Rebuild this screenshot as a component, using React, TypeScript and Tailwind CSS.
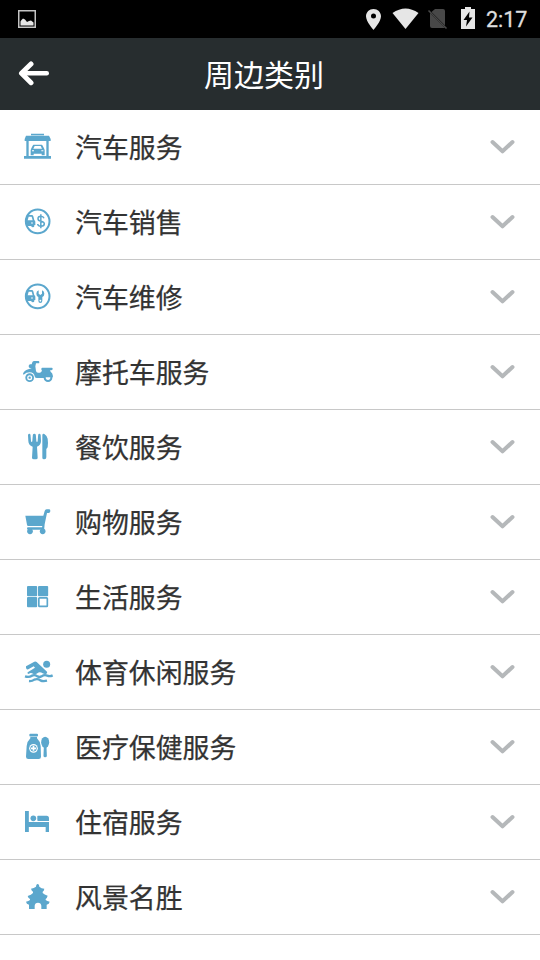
import React from "react";

const BLUE = "#5ba7cd";

const minicar = (
  <>
    <path fillRule="evenodd" d="M51 60h14q4 0 5 4l3 12q3 1 3 5v9h-3v3q0 4-4.500 4T64 94v-1H52l-6-12z M56 65l-3 11h15l-3-11z" />
    <circle cx="66" cy="84" r="2.500" fill="#fff" />
  </>
);

const icons: Record<string, React.ReactNode> = {
  garage: (
    <>
      <path d="M63 41h39v4.500H63z M48 47h69l5 10v6H44v-6z M49 61h7v48h-7z M109 61h7v48h-7z M42 108h81v8.500H42z" />
      <path d="M71 74h24q2 0 3 3l4 8 2 5v16h-9v-5H71v5h-9V90l2-5 4-8q1-3 3-3z M74 78l-4 8h26l-4-8z" fillRule="evenodd" />
      <path d="M66 91h6v3h-6z M94 91h6v3h-6z" fill="#fff" />
    </>
  ),
  sales: (
    <>
      <circle cx="83" cy="79" r="35.500" fill="none" stroke={BLUE} strokeWidth="6" />
      {minicar}
      <path d="M102 70q-2-6-9.500-6-8.500 0-8.500 7 0 6 9 7.500 10 1.500 10 8 0 7.500-10 7.500-9 0-10-7M92.500 58v42" fill="none" stroke={BLUE} strokeWidth="4.500" />
    </>
  ),
  repair: (
    <>
      <circle cx="83" cy="79" r="35.500" fill="none" stroke={BLUE} strokeWidth="6" />
      {minicar}
      <path fillRule="evenodd" d="M86 61v10l5 4 5-4V61q7 3 7 10 0 7-6 10v11q0 7-6 7-6 0-6-7V81q-6-3-6-10 0-7 7-10z M91 89.500a2.500 2.500 0 1 0 .1 0z" />
    </>
  ),
  scooter: (
    <>
      <path d="M70 48h15q3 0 3 3.500t-3 3.500h-7l-2 9 2 14q1 5 6 5h5q3 0 5-3l2-3q-2-2-2-5 0-4 3-4h28q3 0 3 3 0 5-5 5h-3l2 4q6 4 7 14 0 4-4 4h-14l-4 1H80q-6 0-6-5-2-12-15-12-11 0-16 6-4 2-4-2 3-9 16-13l9-3v-1h-4q-4 0-4-5t4-6h5l2-6q1-3 4-3z" />
      <circle cx="59" cy="98" r="13" />
      <circle cx="59" cy="98" r="7.500" fill="#fff" />
      <circle cx="59" cy="98" r="3.500" />
      <circle cx="114" cy="98" r="13" />
      <path d="M107 97h14q0 8-7 8t-7-8z" fill="#fff" />
    </>
  ),
  food: (
    <>
      <path d="M54 45q1-4 4-4t3.500 4l1.500 18q.5 3 2 3t2-3l1.500-18q.5-4 4.500-4t4.500 4l1.500 18q.5 3 2 3t2-3l1.500-18q.5-4 3.500-4t4 4l1 18q0 12-12 17l2 33q0 5-5 5h-6q-6 0-6-5l2-33q-13-5-13-17z" />
      <path d="M97 45q1-5 6-3 8 5 10 14 2 13 0 26l-4 5v25q0 6-6 6h-1q-5 0-5-5z" />
    </>
  ),
  cart: (
    <>
      <path d="M46 62h54l4-14q1-5 6-5h8q3 0 3 5t-4 6h-6l-7 34-2 21h-7l1-5H54q-3 0-3-3.500t3-3.500h42l1-4H55q-4 0-4-4z" />
      <circle cx="60" cy="109" r="8.500" />
      <circle cx="98" cy="109" r="8.500" />
    </>
  ),
  grid: (
    <>
      <rect x="51" y="48" width="30.500" height="30.500" rx="3" />
      <rect x="84" y="48" width="30.500" height="30.500" rx="3" />
      <rect x="51" y="81" width="30.500" height="30.500" rx="3" />
      <rect x="86.500" y="83.500" width="25.500" height="25.500" rx="2" fill="#fff" stroke={BLUE} strokeWidth="5" />
    </>
  ),
  swim: (
    <>
      <circle cx="110" cy="58" r="10.500" />
      <path d="M48 64l25-14q4-2 7 1l31 29q2 4-2 6-5 2-11-1-9-6-16 0-7 5-13 1-7-4-13 1-6-1-3-5l22-14-4-4-16 9q-8 2-7-9z" />
      <path d="M45 94q12 4 21-2 8-4 16 2 6 4 13 0 8-6 17-2 8 3 16-1" fill="none" stroke={BLUE} strokeWidth="7" />
      <path d="M57 108q9 1 16-4 10-4 18 2 8 4 20 1" fill="none" stroke={BLUE} strokeWidth="7" />
    </>
  ),
  medicine: (
    <>
      <rect x="58" y="41" width="26" height="8.500" rx="3" />
      <path d="M61 51h20v4q9 8 11 23l1 32q0 7-7 7H55q-7 0-7-7l2-32q2-15 11-23z" />
      <circle cx="70.500" cy="85" r="13" fill="#fff" />
      <circle cx="70.500" cy="85" r="9.500" />
      <path d="M68 77.500h5v5h5v5h-5v5h-5v-5h-5v-5h5z" fill="#fff" />
      <ellipse cx="105.500" cy="67" rx="12" ry="17" />
      <path d="M101.500 80h8l1 27q0 5-5 5t-5-5z" />
    </>
  ),
  bed: (
    <>
      <path d="M45 48h11.500v33H117v30h-10V96H56.500v15H45z" />
      <circle cx="70" cy="70" r="8.500" />
      <path d="M84 62h26q7 0 7 8v8H84q-2 0-2-3V64q0-2 2-2z" />
    </>
  ),
  pagoda: (
    <path d="M79 45q4-6 8 0l1 5q6 6 15 6-1 7-5 9v4q5 5 15 8-2 8-6 10v3q4 4 12 5-1 7-9 9v13H94v-10q-1-9-10-9t-10 9v10H57v-13q-8-2-9-9 8-1 12-5v-3q-6-3-7-9 11-3 16-9v-4q-4-2-6-9 9-1 15-6z" />
  ),
  building: <path d="M84 62l8-2 4 2v24h20v46H54V86h30z" />,
};

const categories = [
  { name: "汽车服务", icon: "garage" },
  { name: "汽车销售", icon: "sales" },
  { name: "汽车维修", icon: "repair" },
  { name: "摩托车服务", icon: "scooter" },
  { name: "餐饮服务", icon: "food" },
  { name: "购物服务", icon: "cart" },
  { name: "生活服务", icon: "grid" },
  { name: "体育休闲服务", icon: "swim" },
  { name: "医疗保健服务", icon: "medicine" },
  { name: "住宿服务", icon: "bed" },
  { name: "风景名胜", icon: "pagoda" },
  { name: "商务住宅", icon: "building" },
];

function StatusBar() {
  return (
    <div className="flex h-[38px] shrink-0 items-center bg-black pr-3 pl-[18px] text-[#dedede]">
      <svg className="h-[18px] w-[18px]" viewBox="0 0 18 18">
        <rect x=".75" y=".75" width="16.500" height="16.500" fill="none" stroke="#c4c4c4" strokeWidth="1.500" />
        <path d="M2.500 15.500v-4l1-1.500 1.500-1.500 2 1 2 2.500 2-1 2-.5 2.500 2v3z" fill="#e6e6e6" />
      </svg>
      <svg className="ml-auto h-[38px] w-[112px] shrink-0" viewBox="366 0 112 38" fill="#e6e6e6">
        <path fillRule="evenodd" d="M373.500 9c-4.200 0-7.500 3.200-7.500 7.300 0 5.300 7.500 13.700 7.500 13.700s7.500-8.400 7.500-13.700c0-4.100-3.300-7.300-7.500-7.300z M373.500 13.500a2.500 2.500 0 1 1 0 5 2.500 2.500 0 0 1 0-5z" />
        <path d="M392.500 13q13-9 26 0l-13 16z" />
        <path d="M435 9h8q2 0 2 2v14.500L431.500 12z M430 13l15 15h-13q-2 0-2-2z" fill="#484848" />
        <path d="M428.500 10.500l18 18" stroke="#484848" strokeWidth="1.600" />
        <path fillRule="evenodd" d="M465 7h6v2h4v20h-14V9h4z M469.500 11.500l-6 8.500h3.500l-1 6.500 6.500-9H469z" />
      </svg>
      <span className="mt-[2px] ml-2 w-[42px] font-['Roboto'] text-[21.5px] leading-none [-webkit-text-stroke:0.3px_#dedede]">2:17</span>
    </div>
  );
}

export default function App() {
  return (
    <div className="flex h-[960px] w-[540px] flex-col overflow-hidden bg-white font-['Noto_Sans_CJK_SC',sans-serif]">
      <StatusBar />
      <header className="grid h-[72px] shrink-0 grid-cols-[68px_1fr_80px] items-center bg-[#272d2f] text-white">
        <svg className="mb-[2px] ml-[18px] h-[26px] w-[32px]" viewBox="18 60 32 26" fill="none" stroke="white" strokeLinecap="round" strokeLinejoin="round">
          <path d="M31 64l-9.500 9.300L31 82.700" strokeWidth="5" />
          <path d="M22 73.300h24.800" strokeWidth="4.400" />
        </svg>
        <h1 className="pb-[3px] text-center text-[30px] leading-none">周边类别</h1>
      </header>
      <ul className="flex flex-col">
        {categories.map((c) => (
          <li key={c.name} className="group flex h-[75px] shrink-0 items-center border-b border-[#c8c8c8] pr-[25px] pl-5">
            <svg className="h-[34px] w-[34px] shrink-0" viewBox="30 30 102 102" fill={BLUE}>
              {icons[c.icon]}
            </svg>
            <span className="ml-[21px] flex-1 text-[26.9px] leading-none text-[#333] group-last:pt-[3px] [-webkit-text-stroke:0.25px_#333]">
              {c.name}
            </span>
            <svg className="h-4 w-[26px]" viewBox="0 0 26 16" fill="none" stroke="#b5b8ba" strokeWidth="4" strokeLinecap="round" strokeLinejoin="round">
              <path d="M3.500 3L13.500 12.300 23.500 3" />
            </svg>
          </li>
        ))}
      </ul>
    </div>
  );
}
